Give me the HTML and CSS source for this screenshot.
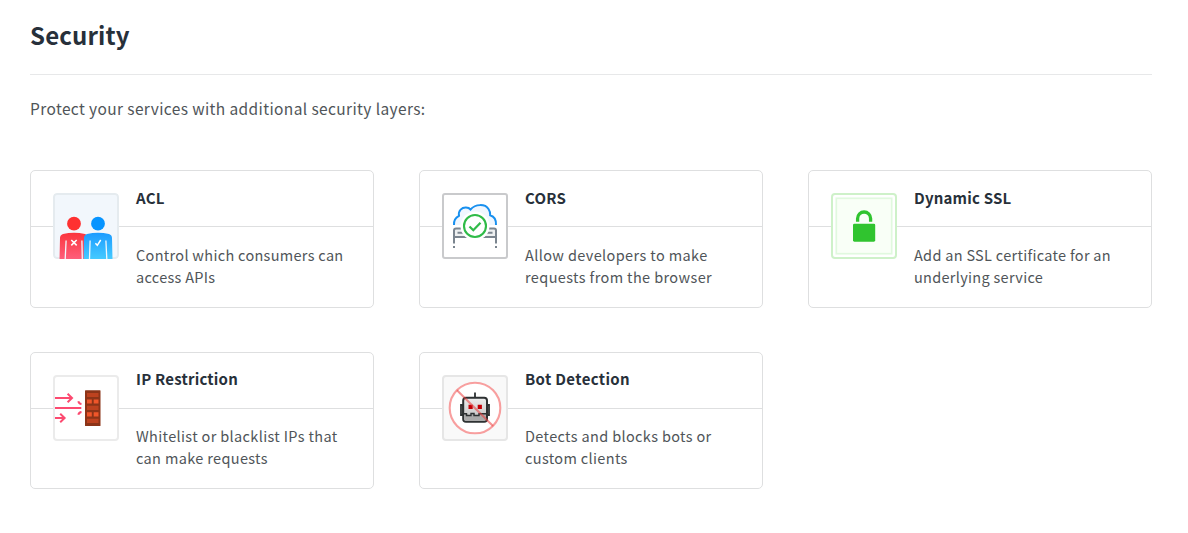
FILE: index.html
```html
<!DOCTYPE html>
<html lang="en">
<head>
<meta charset="utf-8">
<title>Security</title>
<link rel="stylesheet" href="styles.css">
</head>
<body>
<main class="page">
  <h1 class="title"><span>Security</span></h1>
  <p class="intro"><span>Protect your services with additional security layers:</span></p>
  <section class="grid">
    <article class="card">
      <svg class="icon acl" viewBox="0 0 66 66">
        <defs>
          <linearGradient id="red" x1="0" y1="0" x2="0" y2="1"><stop offset="0" stop-color="#fb353c"/><stop offset="1" stop-color="#fe5e7b"/></linearGradient>
          <linearGradient id="blue" x1="0" y1="0" x2="0" y2="1"><stop offset="0" stop-color="#1b9bff"/><stop offset="1" stop-color="#45caff"/></linearGradient>
        </defs>
        <rect x="1" y="1" width="64" height="64" rx="3" fill="#f2f7fc" stroke="#e5ebef" stroke-width="2"/>
        <circle cx="21" cy="30.7" r="6.9" fill="#fe3131"/>
        <circle cx="45" cy="30.7" r="6.9" fill="#0794ff"/>
        <path d="M6.5 66 7 45Q7 42 10 41Q21 38.5 32 41Q35 42 35 45V66Z" fill="url(#red)"/>
        <path d="M30.7 66 31 45Q31 42 34 41Q45 38.5 56 41Q59 42 59 45L59.5 66Z" fill="url(#blue)"/>
        <path d="M13.1 47.5 12.2 66M28.9 47.5 29.3 66M37.1 47.5 36.5 66M52.9 47.5 53.8 66" stroke="#f2f7fc" stroke-width="1.3"/>
        <path d="m18.3 47 5.4 5.4m0-5.4-5.4 5.4M42.4 50.2l1.9 2.1 3.4-5.3" fill="none" stroke="#fff" stroke-width="1.5"/>
      </svg>
      <h2 class="name"><span>ACL</span></h2>
      <p class="text"><span>Control which consumers can<br>access APIs</span></p>
    </article>
    <article class="card">
      <svg class="icon" viewBox="0 0 66 66">
        <rect x="1" y="1" width="64" height="64" rx="2" fill="#fff" stroke="#c9cacc" stroke-width="2"/>
        <path d="M12 32Q11.5 25.5 17 22.8C16 17.5 20 14.4 24 14.6Q27 14.7 28.5 16.5C33.5 10.8 43 10.7 46.5 16Q48.5 19 48.2 22.2C52.5 23.5 54.3 27 54 32Z" fill="#f0f7ff"/>
        <path d="M12 32Q11.5 25.5 17 22.8C16 17.5 20 14.4 24 14.6Q27 14.7 28.5 16.5C33.5 10.8 43 10.7 46.5 16Q48.5 19 48.2 22.2C52.5 23.5 54.3 27 54 32" fill="none" stroke="#1890ef" stroke-width="2"/>
        <path d="M13 36H53V44H13Z" fill="#eef0f1"/>
        <path d="M12 50.5V37.5Q12 35.5 14 35.5H52Q54 35.5 54 37.5V50.5M12 44H54M15.5 39.8H22M44 39.8H50.5M12 53V55M54 53V55" fill="none" stroke="#7b858f" stroke-width="2"/>
        <circle cx="33" cy="33" r="14.5" fill="#fff"/>
        <circle cx="33" cy="33" r="11" fill="#fff" stroke="#2fbb48" stroke-width="2.1"/>
        <path d="m27.5 33.5 3.8 3.7 7.2-7.4" fill="none" stroke="#31bb4a" stroke-width="2.3"/>
      </svg>
      <h2 class="name cors"><span>CORS</span></h2>
      <p class="text cors"><span>Allow developers to make<br>requests from the browser</span></p>
    </article>
    <article class="card">
      <svg class="icon" viewBox="0 0 66 66">
        <rect x="1" y="1" width="64" height="64" rx="3" fill="#fff" stroke="#cef1c9" stroke-width="2"/>
        <rect x="5.3" y="5.3" width="55.4" height="55.4" fill="#f9fff7" stroke="#e1f9df" stroke-width="1.7"/>
        <path d="M26.6 28.7V25.6A6.5 6.6 0 0 1 39.6 25.6V28.7" fill="none" stroke="#30c42f" stroke-width="3.3"/>
        <rect x="22" y="30.7" width="22.2" height="18" rx="1.4" fill="#30c42f"/>
      </svg>
      <h2 class="name ssl"><span>Dynamic SSL</span></h2>
      <p class="text ssl"><span>Add an SSL certificate for an<br>underlying service</span></p>
    </article>
    <article class="card">
      <svg class="icon" viewBox="0 0 66 66">
        <rect x="1" y="1" width="64" height="64" rx="3" fill="#fff" stroke="#ebebeb" stroke-width="2"/>
        <path d="M2 23H18M14.6 18.8 19 23 14.6 27.2M2 33H28.3M2 43H11M7.2 38.8 11.6 43 7.2 47.2M25.3 26.3Q26 28.8 28.5 29.1M25.3 39.7Q26 37.2 28.5 36.9" fill="none" stroke="#fc4a70" stroke-width="2"/>
        <rect x="32" y="15.2" width="15.5" height="35.8" rx=".6" fill="#8c3418"/>
        <path d="M34 18H45.5V22H34ZM34 30.8H45.5V35H34ZM34 43.8H45.5V48H34Z" fill="#bd421f"/>
        <path d="M34 24.4H38.8V28.6H34ZM40.7 24.4H45.5V28.6H40.7ZM34 37.2H38.8V41.6H34ZM40.7 37.2H45.5V41.6H40.7Z" fill="#f0562a"/>
      </svg>
      <h2 class="name ip"><span>IP Restriction</span></h2>
      <p class="text ip"><span>Whitelist or blacklist IPs that<br>can make requests</span></p>
    </article>
    <article class="card">
      <svg class="icon" viewBox="0 0 66 66">
        <defs><linearGradient id="face" x1="0" y1="0" x2="0" y2="1"><stop offset="0" stop-color="#eee"/><stop offset="1" stop-color="#bdbdbd"/></linearGradient></defs>
        <rect x="1" y="1" width="64" height="64" rx="3" fill="#f9f9f9" stroke="#e6e6e6" stroke-width="2"/>
        <circle cx="33" cy="33" r="25.4" fill="#fff"/>
        <path d="M33 17.5V23M19 30H21V40H19ZM47 30H45V40H47Z" fill="none" stroke="#2d3132" stroke-width="1.8"/>
        <rect x="21.2" y="22.8" width="23.8" height="24" rx="2.8" fill="url(#face)" stroke="#2d3132" stroke-width="2"/>
        <path d="M22 39H25.5V41H29.5V38.5H33V41H37V39H44V44Q44 46 42 46H24Q22 46 22 44Z" fill="#aaa"/>
        <path d="M21 38.7H24.5V40.5H29V38.5H32V40.5H37V38.7H45" fill="none" stroke="#2d3132" stroke-width="1.4"/>
        <path d="M26.5 29.8H30.7V34H26.5ZM35.7 29.8H39.9V34H35.7Z" fill="#c20006"/>
        <circle cx="33" cy="33" r="25.3" fill="none" stroke="#f44242" stroke-opacity=".5" stroke-width="2.1"/>
        <path d="M15 15.3 51 51" stroke="#e93e3e" stroke-opacity=".56" stroke-width="2.1"/>
      </svg>
      <h2 class="name bot"><span>Bot Detection</span></h2>
      <p class="text bot"><span>Detects and blocks bots or<br>custom clients</span></p>
    </article>
  </section>
</main>
</body>
</html>
```
FILE: styles.css
```css
* { box-sizing: border-box; }
body {
  margin: 0;
  background: #fff;
  color: #505559;
  font-family: "Noto Sans CJK SC", "Noto Sans", sans-serif;
}
.page { width: 1152px; padding-left: 30px; }
.title {
  margin: 0;
  height: 75px;
  padding-top: 16px;
  border-bottom: 1px solid #e7e8e9;
  color: #27303a;
  font-size: 24px;
  line-height: 38px;
  font-weight: 700;
  letter-spacing: .15px;
}
.intro {
  margin: 0;
  padding-top: 22px;
  height: 95px;
  font-size: 15.5px;
  line-height: 22px;
  letter-spacing: .38px;
}
.grid {
  display: grid;
  grid-template-columns: repeat(3, 344px);
  grid-template-rows: 138px 137px;
  gap: 44px 45px;
}
.card {
  display: grid;
  grid-template-columns: 105px 1fr;
  grid-template-rows: 56px 1fr;
  border: 1px solid #dedfe0;
  border-radius: 5px;
}
.icon {
  grid-column: 1;
  grid-row: 1 / 3;
  width: 66px;
  height: 66px;
  margin: 22px 0 0 22px;
  z-index: 1;
}
.acl { border-radius: 4px; }
.name {
  grid-column: 1 / 3;
  grid-row: 1;
  margin: 0;
  padding: 16px 0 0 105px;
  border-bottom: 1px solid #dedfe0;
  color: #27303a;
  font-size: 15px;
  line-height: 22px;
  font-weight: 700;
  letter-spacing: .2px;
}
.text {
  grid-column: 2;
  grid-row: 2;
  margin: 0;
  padding-top: 17px;
  font-size: 14.5px;
  line-height: 22px;
  letter-spacing: .3px;
  white-space: nowrap;
}
.name.ip, .name.bot { padding-top: 15px; }
.text.ip, .text.bot { padding-top: 16px; }
.name.bot { letter-spacing: .35px; }
.text.cors { letter-spacing: .38px; }
.text.ip, .text.bot { letter-spacing: .35px; }
```
